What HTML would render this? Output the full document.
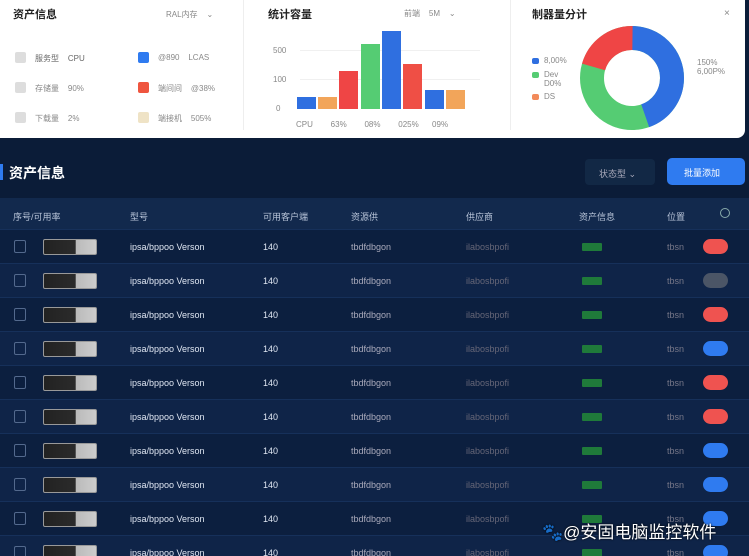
<!DOCTYPE html>
<html><head><meta charset="utf-8"><style>
*{margin:0;padding:0;box-sizing:border-box}
html,body{width:749px;height:556px;overflow:hidden}
body{background:#0b1c38;font-family:"Liberation Sans","Noto Sans CJK SC",sans-serif;position:relative}
.top{position:absolute;left:0;top:0;width:745px;height:138px;background:#fff;border-radius:0 0 8px 0}
.t{position:absolute;font-size:11px;color:#222;font-weight:bold}
.s{position:absolute;font-size:8px;color:#888}
.sq{position:absolute;width:11px;height:11px;border-radius:2px}
.div{position:absolute;top:0;width:1px;height:130px;background:#eee}
.bar{position:absolute;width:19px}
.row{position:absolute;left:0;width:749px;height:34px;font-size:9px;color:#dfe6f2}
.row span{position:absolute;top:12px}
.cb{position:absolute;left:14px;top:10px;width:12px;height:13px;border:1px solid #53698d;border-radius:2px}
.img{position:absolute;left:43px;top:9px;width:54px;height:16px;background:linear-gradient(90deg,#222 0,#2b2b2b 60%,#bbb 62%,#ccc 100%);border:1px solid #999;border-radius:2px}
.g{position:absolute;left:582px;top:13px;width:20px;height:8px;background:#1f7a3a;border-radius:1px}
.bd{position:absolute;left:703px;top:9px;width:25px;height:15px;border-radius:8px}
.h span{position:absolute;top:12px;font-size:9px;color:#b8c4d8}
</style></head><body>
<div class="top">
<div class="t" style="left:13px;top:6px">资产信息</div>
<div class="s" style="left:166px;top:9px">RAL内存 &nbsp;&nbsp; ⌄</div>
<div class="sq" style="left:15px;top:52px;background:#ddd"></div><div class="s" style="left:35px;top:53px;color:#666">服务型 &nbsp;&nbsp; CPU</div>
<div class="sq" style="left:15px;top:82px;background:#ddd"></div><div class="s" style="left:35px;top:83px">存储量 &nbsp;&nbsp; 90%</div>
<div class="sq" style="left:15px;top:112px;background:#ddd"></div><div class="s" style="left:35px;top:113px">下载量 &nbsp;&nbsp; 2%</div>
<div class="sq" style="left:138px;top:52px;background:#2f7bf0"></div><div class="s" style="left:158px;top:53px">@890 &nbsp;&nbsp; LCAS</div>
<div class="sq" style="left:138px;top:82px;background:#ef553f"></div><div class="s" style="left:158px;top:83px">端间间 &nbsp;&nbsp; @38%</div>
<div class="sq" style="left:138px;top:112px;background:#efe3c6"></div><div class="s" style="left:158px;top:113px">端接机 &nbsp;&nbsp; 505%</div>
<div class="div" style="left:243px"></div>
<div class="t" style="left:268px;top:6px">统计容量</div>
<div class="s" style="left:404px;top:8px">前端 &nbsp;&nbsp; 5M &nbsp;&nbsp; ⌄</div>
<div class="s" style="left:273px;top:46px">500</div><div class="s" style="left:273px;top:75px">100</div><div class="s" style="left:276px;top:104px">0</div>
<div style="position:absolute;left:300px;top:50px;width:180px;height:1px;background:#f0f0f0"></div>
<div style="position:absolute;left:300px;top:79px;width:180px;height:1px;background:#f0f0f0"></div>
<div class="bar" style="left:297px;top:97px;height:12px;background:#2f6fe0"></div>
<div class="bar" style="left:318px;top:97px;height:12px;background:#f2a55a"></div>
<div class="bar" style="left:339px;top:71px;height:38px;background:#ef4545"></div>
<div class="bar" style="left:361px;top:44px;height:65px;background:#55cc73"></div>
<div class="bar" style="left:382px;top:31px;height:78px;background:#2f6fe0"></div>
<div class="bar" style="left:403px;top:64px;height:45px;background:#ef4f45"></div>
<div class="bar" style="left:425px;top:90px;height:19px;background:#2f6fe0"></div>
<div class="bar" style="left:446px;top:90px;height:19px;background:#f2a55a"></div>
<div class="s" style="left:296px;top:120px">CPU &nbsp;&nbsp;&nbsp;&nbsp;&nbsp;&nbsp; 63% &nbsp;&nbsp;&nbsp;&nbsp;&nbsp;&nbsp; 08% &nbsp;&nbsp;&nbsp;&nbsp;&nbsp;&nbsp; 025% &nbsp;&nbsp;&nbsp;&nbsp; 09%</div>
<div class="div" style="left:510px"></div>
<div class="t" style="left:532px;top:6px">制器量分计</div>
<div class="s" style="left:724px;top:8px;font-size:10px">×</div>
<div class="sq" style="left:532px;top:58px;width:7px;height:6px;background:#2f6fe0"></div><div class="s" style="left:544px;top:56px">8,00%</div>
<div class="sq" style="left:532px;top:72px;width:7px;height:6px;background:#55cc73"></div><div class="s" style="left:544px;top:70px">Dev<br>D0%</div>
<div class="sq" style="left:532px;top:94px;width:7px;height:6px;background:#f28a5a"></div><div class="s" style="left:544px;top:92px">DS</div>
<div class="s" style="left:697px;top:58px">150%<br>6,00P%</div>
<svg style="position:absolute;left:577px;top:23px" width="110" height="110" viewBox="-55 -55 110 110">
<circle r="40" fill="none" stroke="#55cc73" stroke-width="24"/>
<circle r="40" fill="none" stroke="#2f6fe0" stroke-width="24" stroke-dasharray="112 500" transform="rotate(-90)"/>
<circle r="40" fill="none" stroke="#ef4545" stroke-width="24" stroke-dasharray="52 500" transform="rotate(196)"/>
</svg>
</div>
<div style="position:absolute;left:0;top:164px;width:3px;height:16px;background:#2f7bf0"></div>
<div style="position:absolute;left:9px;top:163px;font-size:14px;color:#fff;font-weight:bold">资产信息</div>
<div style="position:absolute;left:585px;top:159px;width:70px;height:26px;background:#122845;border-radius:4px;font-size:9px;color:#aab;padding:8px 14px">状态型 ⌄</div>
<div style="position:absolute;left:667px;top:158px;width:78px;height:27px;background:#2f7bf0;border-radius:5px;font-size:9px;color:#fff;padding:8px 17px">批量添加</div>
<div class="h" style="position:absolute;left:0;top:198px;width:749px;height:31px;background:#12294d">
<span style="left:13px">序号/可用率</span><span style="left:130px">型号</span><span style="left:263px">可用客户端</span><span style="left:351px">资源供</span><span style="left:466px">供应商</span><span style="left:579px">资产信息</span><span style="left:667px">位置</span><span style="left:720px;top:10px;width:10px;height:10px;border:1px solid #8aa;border-radius:50%"></span>
</div>
<div id="rows"></div>
<script>
var c=['#ef5350','#4b5566','#ef5350','#2f7bf0','#ef5350','#ef5350','#2f7bf0','#2f7bf0','#2f7bf0','#2f7bf0'];
var h='';for(var i=0;i<10;i++){var t=229+i*34;
h+='<div class="row" style="top:'+t+'px;background:'+(i%2?'#0f2448':'#0c1f3f')+';border-top:1px solid #16305a"><div class="cb"></div><div class="img"></div><span style="left:130px">ipsa/bppoo Verson</span><span style="left:263px">140</span><span style="left:351px;color:#aab">tbdfdbgon</span><span style="left:466px;color:#667">ilabosbpofi</span><div class="g"></div><span style="left:667px;color:#778">tbsn</span><div class="bd" style="background:'+c[i]+'"></div></div>';}
document.getElementById('rows').innerHTML=h;
</script>
<div style="position:absolute;left:542px;top:518px;font-size:17px;color:#fff;text-shadow:0 0 2px #000">🐾@安固电脑监控软件</div>
</body></html>
